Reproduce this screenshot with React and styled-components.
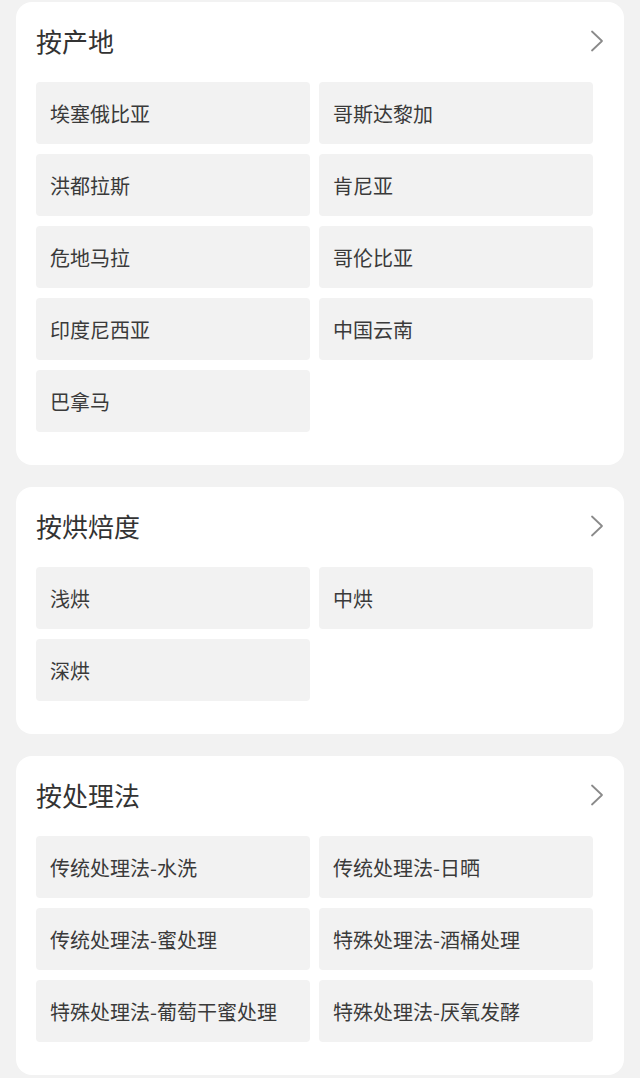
import React from "react";
import styled, { createGlobalStyle } from "styled-components";

const GlobalStyle = createGlobalStyle`
  html, body {
    margin: 0;
    padding: 0;
    background: #f2f2f2;
    font-family: "Noto Sans CJK SC", "Noto Sans", sans-serif;
    color: #333;
  }
`;

const sections = [
  {
    title: "按产地",
    items: [
      "埃塞俄比亚",
      "哥斯达黎加",
      "洪都拉斯",
      "肯尼亚",
      "危地马拉",
      "哥伦比亚",
      "印度尼西亚",
      "中国云南",
      "巴拿马",
    ],
  },
  {
    title: "按烘焙度",
    items: ["浅烘", "中烘", "深烘"],
  },
  {
    title: "按处理法",
    items: [
      "传统处理法-水洗",
      "传统处理法-日晒",
      "传统处理法-蜜处理",
      "特殊处理法-酒桶处理",
      "特殊处理法-葡萄干蜜处理",
      "特殊处理法-厌氧发酵",
    ],
  },
];

const Chevron = () => (
  <svg width="14" height="22" viewBox="0 0 14 22" fill="none">
    <polyline
      points="2 1.5 12 11 2 20.5"
      stroke="#8a8a8a"
      strokeWidth="1.8"
      strokeLinecap="round"
      strokeLinejoin="round"
    />
  </svg>
);

const App = () => {
  return (
    <>
      <GlobalStyle />
      <Page>
        {sections.map((section) => (
          <Card key={section.title}>
            <Header>
              <Title>{section.title}</Title>
              <Chevron />
            </Header>
            <Grid>
              {section.items.map((item) => (
                <Tile key={item}>{item}</Tile>
              ))}
            </Grid>
          </Card>
        ))}
      </Page>
    </>
  );
};

export default App;

const Page = styled.div`
  display: flex;
  flex-direction: column;
  gap: 22px;
  padding: 2px 16px 4px;
`;

const Card = styled.section`
  background: #fff;
  border-radius: 16px;
  padding: 0 20px 33px 20px;
`;

const Header = styled.div`
  display: flex;
  align-items: center;
  justify-content: space-between;
  height: 80px;
  padding-bottom: 2px;
  box-sizing: border-box;
  svg {
    margin-right: 0;
  }
`;

const Title = styled.h2`
  margin: 0;
  font-size: 26px;
  font-weight: 400;
  color: #333;
  line-height: 1;
`;

const Grid = styled.div`
  display: grid;
  grid-template-columns: 274px 274px;
  column-gap: 9px;
  row-gap: 10px;
`;

const Tile = styled.div`
  display: flex;
  align-items: center;
  height: 62px;
  padding-left: 14px;
  background: #f2f2f2;
  border-radius: 4px;
  font-size: 20px;
  color: #3a3a3a;
  white-space: nowrap;
`;
